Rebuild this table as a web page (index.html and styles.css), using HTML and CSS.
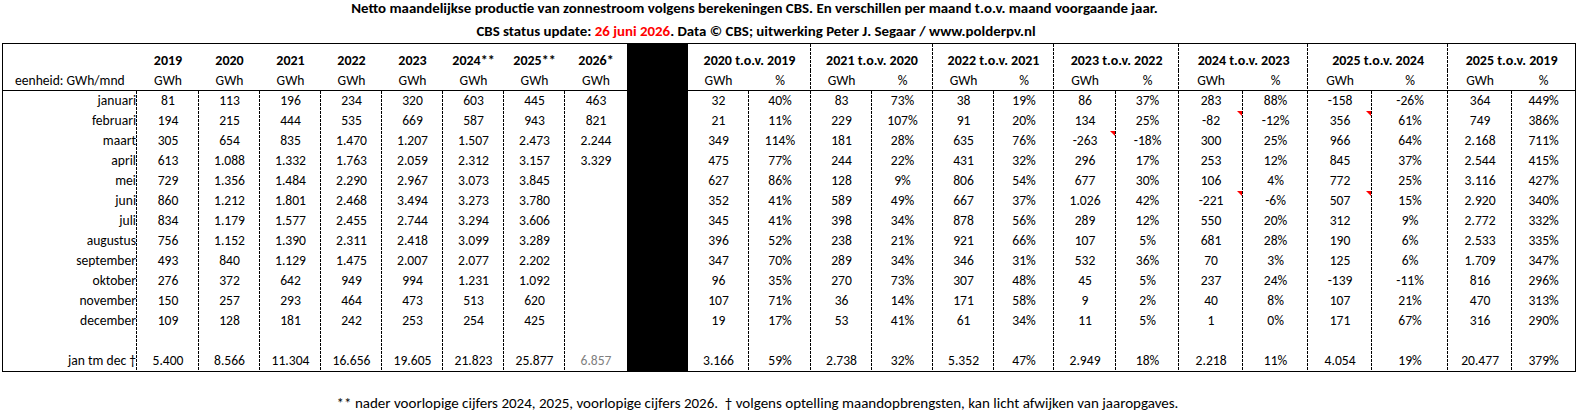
FILE: index.html
```html
<!DOCTYPE html>
<html lang="nl">
<head>
<meta charset="utf-8">
<title>Netto maandelijkse productie zonnestroom CBS</title>
<link rel="stylesheet" href="styles.css">
</head>
<body>
<div class="page">
  <div class="title1">Netto maandelijkse productie van zonnestroom volgens berekeningen CBS. En verschillen per maand t.o.v. maand voorgaande jaar.</div>
  <div class="title2">CBS status update: <span class="red">26 juni 2026</span>. Data © CBS; uitwerking Peter J. Segaar / www.polderpv.nl</div>
  <table class="grid">
    <colgroup>
      <col class="w134">
      <col class="w62"><col class="w61"><col class="w61"><col class="w61"><col class="w61"><col class="w61"><col class="w61"><col class="w62">
      <col class="w61">
      <col class="w61"><col class="w62">
      <col class="w61"><col class="w61">
      <col class="w61"><col class="w60">
      <col class="w62"><col class="w63">
      <col class="w64"><col class="w65">
      <col class="w64"><col class="w76">
      <col class="w64"><col class="w63">
    </colgroup>
    <thead>
      <tr class="h1">
        <th></th>
        <th>2019</th><th>2020</th><th>2021</th><th>2022</th><th>2023</th><th>2024**</th><th>2025**</th><th>2026*</th>
        <th class="k"></th>
        <th colspan="2" class="d">2020 t.o.v. 2019</th>
        <th colspan="2" class="d">2021 t.o.v. 2020</th>
        <th colspan="2" class="d">2022 t.o.v. 2021</th>
        <th colspan="2" class="d">2023 t.o.v. 2022</th>
        <th colspan="2" class="d">2024 t.o.v. 2023</th>
        <th colspan="2" class="d">2025 t.o.v. 2024</th>
        <th colspan="2">2025 t.o.v. 2019</th>
      </tr>
      <tr class="h2">
        <th class="unit">eenheid: GWh/mnd</th>
        <th>GWh</th><th>GWh</th><th>GWh</th><th>GWh</th><th>GWh</th><th>GWh</th><th>GWh</th><th>GWh</th>
        <th class="k"></th>
        <th>GWh</th><th class="d">%</th>
        <th>GWh</th><th class="d">%</th>
        <th>GWh</th><th class="d">%</th>
        <th>GWh</th><th class="d">%</th>
        <th>GWh</th><th class="d">%</th>
        <th>GWh</th><th class="d">%</th>
        <th>GWh</th><th>%</th>
      </tr>
    </thead>
    <tbody>
      <tr><td class="m">januari</td><td>81</td><td>113</td><td>196</td><td>234</td><td>320</td><td>603</td><td>445</td><td class="e">463</td><td class="k"></td><td>32</td><td>40%</td><td>83</td><td>73%</td><td>38</td><td>19%</td><td>86</td><td>37%</td><td>283</td><td>88%</td><td>-158</td><td>-26%</td><td>364</td><td class="e">449%</td></tr>
      <tr><td class="m">februari</td><td>194</td><td>215</td><td>444</td><td>535</td><td>669</td><td>587</td><td>943</td><td class="e">821</td><td class="k"></td><td>21</td><td>11%</td><td>229</td><td>107%</td><td>91</td><td>20%</td><td>134</td><td>25%</td><td class="c">-82<span class="note"></span></td><td>-12%</td><td class="c">356<span class="note"></span></td><td>61%</td><td>749</td><td class="e">386%</td></tr>
      <tr><td class="m">maart</td><td>305</td><td>654</td><td>835</td><td>1.470</td><td>1.207</td><td>1.507</td><td>2.473</td><td class="e">2.244</td><td class="k"></td><td>349</td><td>114%</td><td>181</td><td>28%</td><td>635</td><td>76%</td><td class="c">-263<span class="note"></span></td><td>-18%</td><td>300</td><td>25%</td><td>966</td><td>64%</td><td>2.168</td><td class="e">711%</td></tr>
      <tr><td class="m">april</td><td>613</td><td>1.088</td><td>1.332</td><td>1.763</td><td>2.059</td><td>2.312</td><td>3.157</td><td class="e">3.329</td><td class="k"></td><td>475</td><td>77%</td><td>244</td><td>22%</td><td>431</td><td>32%</td><td>296</td><td>17%</td><td>253</td><td>12%</td><td>845</td><td>37%</td><td>2.544</td><td class="e">415%</td></tr>
      <tr><td class="m">mei</td><td>729</td><td>1.356</td><td>1.484</td><td>2.290</td><td>2.967</td><td>3.073</td><td>3.845</td><td class="e"></td><td class="k"></td><td>627</td><td>86%</td><td>128</td><td>9%</td><td>806</td><td>54%</td><td>677</td><td>30%</td><td>106</td><td>4%</td><td>772</td><td>25%</td><td>3.116</td><td class="e">427%</td></tr>
      <tr><td class="m">juni</td><td>860</td><td>1.212</td><td>1.801</td><td>2.468</td><td>3.494</td><td>3.273</td><td>3.780</td><td class="e"></td><td class="k"></td><td>352</td><td>41%</td><td>589</td><td>49%</td><td>667</td><td>37%</td><td>1.026</td><td>42%</td><td class="c">-221<span class="note"></span></td><td>-6%</td><td class="c">507<span class="note"></span></td><td>15%</td><td>2.920</td><td class="e">340%</td></tr>
      <tr><td class="m">juli</td><td>834</td><td>1.179</td><td>1.577</td><td>2.455</td><td>2.744</td><td>3.294</td><td>3.606</td><td class="e"></td><td class="k"></td><td>345</td><td>41%</td><td>398</td><td>34%</td><td>878</td><td>56%</td><td>289</td><td>12%</td><td>550</td><td>20%</td><td>312</td><td>9%</td><td>2.772</td><td class="e">332%</td></tr>
      <tr><td class="m">augustus</td><td>756</td><td>1.152</td><td>1.390</td><td>2.311</td><td>2.418</td><td>3.099</td><td>3.289</td><td class="e"></td><td class="k"></td><td>396</td><td>52%</td><td>238</td><td>21%</td><td>921</td><td>66%</td><td>107</td><td>5%</td><td>681</td><td>28%</td><td>190</td><td>6%</td><td>2.533</td><td class="e">335%</td></tr>
      <tr><td class="m">september</td><td>493</td><td>840</td><td>1.129</td><td>1.475</td><td>2.007</td><td>2.077</td><td>2.202</td><td class="e"></td><td class="k"></td><td>347</td><td>70%</td><td>289</td><td>34%</td><td>346</td><td>31%</td><td>532</td><td>36%</td><td>70</td><td>3%</td><td>125</td><td>6%</td><td>1.709</td><td class="e">347%</td></tr>
      <tr><td class="m">oktober</td><td>276</td><td>372</td><td>642</td><td>949</td><td>994</td><td>1.231</td><td>1.092</td><td class="e"></td><td class="k"></td><td>96</td><td>35%</td><td>270</td><td>73%</td><td>307</td><td>48%</td><td>45</td><td>5%</td><td>237</td><td>24%</td><td>-139</td><td>-11%</td><td>816</td><td class="e">296%</td></tr>
      <tr><td class="m">november</td><td>150</td><td>257</td><td>293</td><td>464</td><td>473</td><td>513</td><td>620</td><td class="e"></td><td class="k"></td><td>107</td><td>71%</td><td>36</td><td>14%</td><td>171</td><td>58%</td><td>9</td><td>2%</td><td>40</td><td>8%</td><td>107</td><td>21%</td><td>470</td><td class="e">313%</td></tr>
      <tr><td class="m">december</td><td>109</td><td>128</td><td>181</td><td>242</td><td>253</td><td>254</td><td>425</td><td class="e"></td><td class="k"></td><td>19</td><td>17%</td><td>53</td><td>41%</td><td>61</td><td>34%</td><td>11</td><td>5%</td><td>1</td><td>0%</td><td>171</td><td>67%</td><td>316</td><td class="e">290%</td></tr>
      <tr><td class="m"></td><td></td><td></td><td></td><td></td><td></td><td></td><td></td><td class="e"></td><td class="k"></td><td></td><td></td><td></td><td></td><td></td><td></td><td></td><td></td><td></td><td></td><td></td><td></td><td></td><td class="e"></td></tr>
      <tr><td class="m">jan tm dec †</td><td>5.400</td><td>8.566</td><td>11.304</td><td>16.656</td><td>19.605</td><td>21.823</td><td>25.877</td><td class="e gray">6.857</td><td class="k"></td><td>3.166</td><td>59%</td><td>2.738</td><td>32%</td><td>5.352</td><td>47%</td><td>2.949</td><td>18%</td><td>2.218</td><td>11%</td><td>4.054</td><td>19%</td><td>20.477</td><td class="e">379%</td></tr>
    </tbody>
  </table>
  <div class="foot">** nader voorlopige cijfers 2024, 2025, voorlopige cijfers 2026. &nbsp;† volgens optelling maandopbrengsten, kan licht afwijken van jaaropgaves.</div>
</div>
</body>
</html>
```

FILE: styles.css
```css
html, body {
  margin: 0;
  padding: 0;
  background: #ffffff;
}

.page {
  width: 1579px;
  height: 413px;
  font-family: "Carlito", "Lato", "Liberation Sans", sans-serif;
  color: #000000;
  overflow: hidden;
}

.title1 {
  font-size: 14.9px;
  font-weight: bold;
  line-height: 17px;
  text-align: center;
  padding-right: 70px;
}

.title2 {
  font-size: 14.9px;
  font-weight: bold;
  line-height: 17px;
  text-align: center;
  margin-top: 6px;
  padding-right: 67px;
}

.red {
  color: #ff0000;
}

.grid {
  margin: 3px 0 0 2px;
  border: 1px solid #000000;
  border-collapse: separate;
  border-spacing: 0;
  table-layout: fixed;
  width: 1574px;
  font-size: 13.6px;
}

.w134 { width: 134px; }
.w60 { width: 60px; }
.w61 { width: 61px; }
.w62 { width: 62px; }
.w63 { width: 63px; }
.w64 { width: 64px; }
.w65 { width: 65px; }
.w76 { width: 76px; }

.grid th,
.grid td {
  padding: 0;
  text-align: center;
  white-space: nowrap;
  overflow: visible;
}

.grid th {
  vertical-align: bottom;
  line-height: 19px;
}

.h1 th {
  height: 26px;
  font-weight: bold;
  font-size: 14px;
}

.h2 th {
  height: 20px;
  font-weight: normal;
  border-bottom: 1px solid #000000;
}

.h2 th.unit {
  text-align: left;
  padding-left: 12px;
}

/* dashed vertical rule on the right edge of a cell */
.grid th.d,
.grid td {
  background-image: linear-gradient(to bottom, #000000 3px, transparent 3px);
  background-size: 1px 4px;
  background-position: right top;
  background-repeat: repeat-y;
}

.grid td {
  height: 20px;
  line-height: 20px;
  vertical-align: middle;
}

.grid td.m {
  text-align: right;
  padding-right: 1px;
}

.grid td.e {
  background-image: none;
}

.grid .k {
  background: #000000;
}

.grid td.gray {
  color: #808080;
}

.grid td.c {
  position: relative;
}

.note {
  position: absolute;
  top: 0;
  right: 1px;
  width: 0;
  height: 0;
  border-top: 5px solid #ff0000;
  border-left: 5px solid transparent;
}

.foot {
  font-size: 15px;
  line-height: 17px;
  text-align: center;
  padding-right: 64px;
  margin-top: 23px;
}
```
